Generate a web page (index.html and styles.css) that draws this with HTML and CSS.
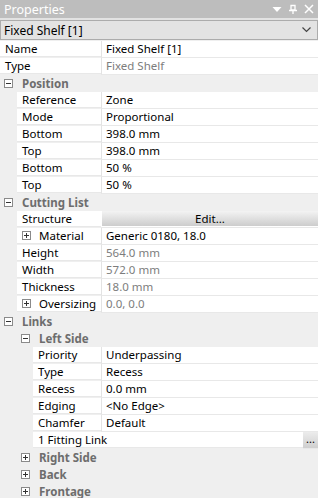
FILE: index.html
```html
<!DOCTYPE html>
<html lang="en">
<head>
  <meta charset="UTF-8">
  <title>Properties</title>
  <link rel="stylesheet" href="styles.css">
</head>
<body>

<div class="panel">
  <div class="titlebar">
    <span class="title">Properties</span>
    <div class="tools">
      <svg width="10" height="10" viewBox="0 0 10 10"><path d="M0.5 3 L9.5 3 L5 8 Z" fill="#fff"/></svg>
      <svg width="10" height="10" viewBox="0 0 10 10"><path d="M3 1.5 H7 V6 H3 Z M1 6.5 H9 M5 6.5 V10" fill="none" stroke="#fff" stroke-width="1.3"/></svg>
      <svg width="10" height="10" viewBox="0 0 10 10"><path d="M1 1 L9 9 M9 1 L1 9" stroke="#fff" stroke-width="1.5"/></svg>
    </div>
  </div>

  <div class="combo">
    <span>Fixed Shelf [1]</span>
    <svg width="9" height="6" viewBox="0 0 9 6"><path d="M0.5 0.5 L4.5 4.5 L8.5 0.5" fill="none" stroke="#444" stroke-width="1.2"/></svg>
  </div>

  <div class="grid">
    <div class="row d0"><div class="name">Name</div><div class="value">Fixed Shelf [1]</div></div>
    <div class="row d0"><div class="name">Type</div><div class="value dim">Fixed Shelf</div></div>

    <div class="group"><span class="toggle minus"></span>Position</div>
    <div class="row d1"><div class="name">Reference</div><div class="value">Zone</div></div>
    <div class="row d1"><div class="name">Mode</div><div class="value">Proportional</div></div>
    <div class="row d1"><div class="name">Bottom</div><div class="value">398.0 mm</div></div>
    <div class="row d1"><div class="name">Top</div><div class="value">398.0 mm</div></div>
    <div class="row d1"><div class="name">Bottom</div><div class="value">50 %</div></div>
    <div class="row d1"><div class="name">Top</div><div class="value">50 %</div></div>

    <div class="group"><span class="toggle minus"></span>Cutting List</div>
    <div class="row d1"><div class="name">Structure</div><div class="value btncell"><div class="edit">Edit...</div></div></div>
    <div class="row d1"><div class="name expand"><span class="toggle plus"></span>Material</div><div class="value">Generic 0180, 18.0</div></div>
    <div class="row d1"><div class="name">Height</div><div class="value dim">564.0 mm</div></div>
    <div class="row d1"><div class="name">Width</div><div class="value dim">572.0 mm</div></div>
    <div class="row d1"><div class="name">Thickness</div><div class="value dim">18.0 mm</div></div>
    <div class="row d1"><div class="name expand"><span class="toggle plus"></span>Oversizing</div><div class="value dim">0.0, 0.0</div></div>

    <div class="group"><span class="toggle minus"></span>Links</div>
    <div class="group sub"><span class="toggle minus"></span>Left Side</div>
    <div class="row d2"><div class="name">Priority</div><div class="value">Underpassing</div></div>
    <div class="row d2"><div class="name">Type</div><div class="value">Recess</div></div>
    <div class="row d2"><div class="name">Recess</div><div class="value">0.0 mm</div></div>
    <div class="row d2"><div class="name">Edging</div><div class="value">&lt;No Edge&gt;</div></div>
    <div class="row d2"><div class="name">Chamfer</div><div class="value">Default</div></div>
    <div class="row d2 wide"><div class="name">1 Fitting Link</div><div class="dots">...</div></div>
    <div class="group sub"><span class="toggle plus"></span>Right Side</div>
    <div class="group sub"><span class="toggle plus"></span>Back</div>
    <div class="group sub"><span class="toggle plus"></span>Frontage</div>
  </div>
</div>

</body>
</html>
```

FILE: styles.css
```css
body {
  margin: 0;
  padding: 0;
  background-color: #efefef;
  font-family: "Segoe UI", "Noto Sans", Arial, sans-serif;
  font-size: 11.5px;
  color: #000;
}

.panel {
  width: 318px;
  height: 498px;
  overflow: hidden;
  background-color: #efefef;
}

.titlebar {
  height: 18px;
  background-color: #bdbdbd;
  display: flex;
  align-items: center;
  justify-content: space-between;
  padding: 0 4px 0 4px;
  border-bottom: 2px solid #e2e2e2;
}

.title {
  color: #fff;
  font-size: 12.5px;
}

.tools {
  display: flex;
  gap: 6px;
  align-items: center;
}

.combo {
  height: 18px;
  background-color: #e3e3e3;
  border: 1px solid #acacac;
  display: flex;
  align-items: center;
  justify-content: space-between;
  padding: 0 6px 0 3px;
  margin-bottom: 1px;
  font-size: 12px;
}

.row {
  display: flex;
  height: 17px;
}

.name, .value {
  background-color: #fff;
  height: 16px;
  line-height: 16px;
  border-bottom: 1px solid #e8e8e8;
  white-space: nowrap;
  overflow: hidden;
}

.name {
  padding-left: 5px;
  box-sizing: border-box;
}

.d0 .name { width: 101px; }
.d1 { padding-left: 17px; }
.d1 .name { width: 84px; }
.d2 { padding-left: 33px; }
.d2 .name { width: 68px; }

.value {
  flex: 1;
  border-left: 1px solid #e3e3e3;
  padding-left: 4px;
}

.dim {
  color: #7d7d7d;
}

.wide .name {
  flex: 1;
}

.dots {
  width: 15px;
  height: 16px;
  line-height: 14px;
  text-align: center;
  font-size: 11px;
  background: linear-gradient(#ececec, #cfcfcf);
  border-bottom: 1px solid #e8e8e8;
}

.btncell {
  padding: 0;
  border-left: none;
}

.edit {
  height: 15px;
  line-height: 15px;
  text-align: center;
  margin-left: 1px;
  background: linear-gradient(#f3f3f3, #cdcdcd);
}

.group {
  height: 17px;
  line-height: 17px;
  color: #6d6d6d;
  font-weight: bold;
  display: flex;
  align-items: center;
  padding-left: 4px;
}

.group .toggle {
  margin-right: 9px;
}

.group.sub {
  padding-left: 21px;
}

.expand {
  display: flex;
  align-items: center;
}

.expand .toggle {
  margin-right: 8px;
}

.toggle {
  width: 7px;
  height: 7px;
  border: 1px solid #8a8a8a;
  position: relative;
  flex-shrink: 0;
  background-color: #fff;
}

.toggle::before {
  content: "";
  position: absolute;
  left: 1px;
  top: 3px;
  width: 5px;
  height: 1px;
  background-color: #333;
}

.toggle.plus::after {
  content: "";
  position: absolute;
  left: 3px;
  top: 1px;
  width: 1px;
  height: 5px;
  background-color: #333;
}
```
